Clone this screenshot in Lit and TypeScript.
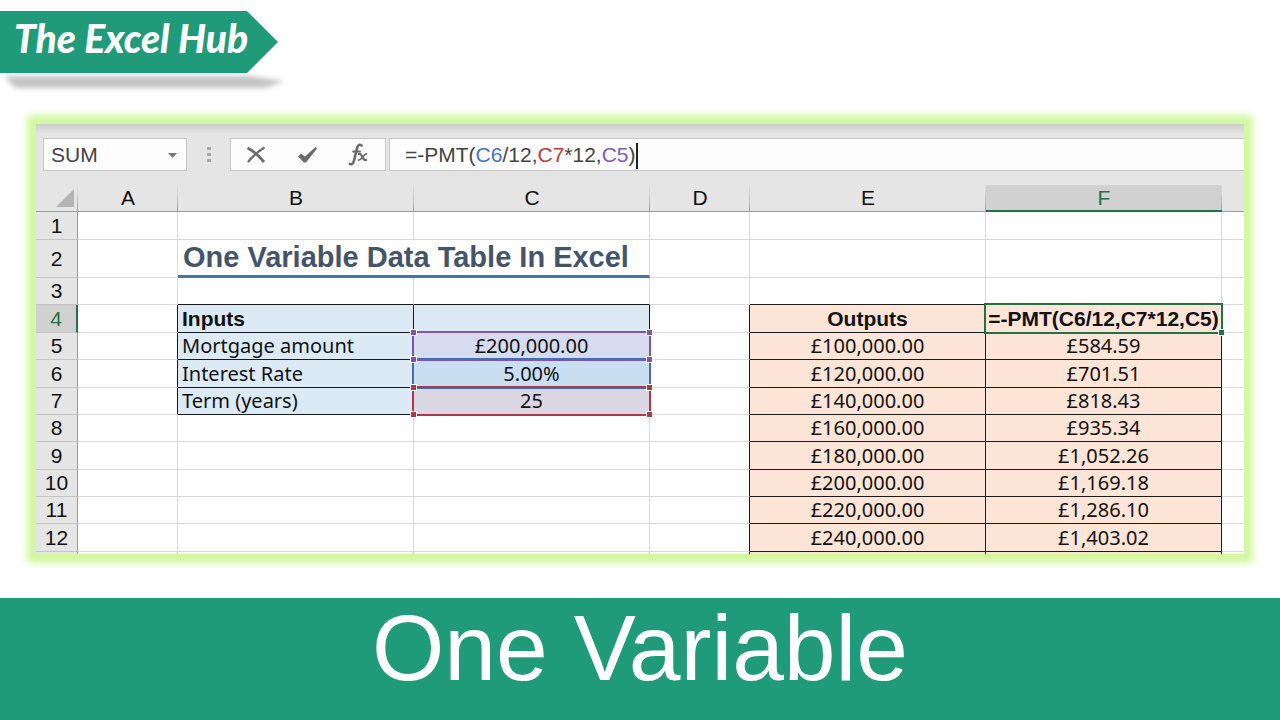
import { LitElement, html, css, nothing } from "lit";
import { customElement, property } from "lit/decorators.js";
import { classMap } from "lit/directives/class-map.js";

const COLUMNS = ["A", "B", "C", "D", "E", "F"];

const INPUTS: Record<number, [string, string, string]> = {
  4: ["Inputs", "", ""],
  5: ["Mortgage amount", "£200,000.00", "purple"],
  6: ["Interest Rate", "5.00%", "blue"],
  7: ["Term (years)", "25", "red"],
};

const OUTPUTS: Record<number, [string, string]> = {
  4: ["Outputs", "=-PMT(C6/12,C7*12,C5)"],
  5: ["£100,000.00", "£584.59"],
  6: ["£120,000.00", "£701.51"],
  7: ["£140,000.00", "£818.43"],
  8: ["£160,000.00", "£935.34"],
  9: ["£180,000.00", "£1,052.26"],
  10: ["£200,000.00", "£1,169.18"],
  11: ["£220,000.00", "£1,286.10"],
  12: ["£240,000.00", "£1,403.02"],
  13: ["", ""],
};

@customElement("brand-ribbon")
export class BrandRibbon extends LitElement {
  static styles = css`
    :host {
      display: block;
      position: relative;
      width: max-content;
    }
    .shape {
      position: absolute;
      left: 0;
      top: 0;
      width: 290px;
      height: 96px;
    }
    .name {
      position: relative;
      box-sizing: border-box;
      min-width: 278px;
      height: 62px;
      margin: 0;
      padding: 0 31px 8px 14px;
      font: italic 900 39px/54px Lato, "Liberation Sans", sans-serif;
      color: #fff;
      white-space: nowrap;
    }
  `;
  render() {
    return html`
      <svg class="shape" viewBox="0 0 290 96" aria-hidden="true">
        <defs>
          <filter id="soft" x="-10%" y="-60%" width="120%" height="220%">
            <feGaussianBlur stdDeviation="2.4" />
          </filter>
        </defs>
        <path d="M4 65H250L284 70L266 77H15Z" fill="#c4c4c4" filter="url(#soft)" />
        <path d="M0 0H247L278 31L247 62H0Z" fill="#1f9b79" />
      </svg>
      <h2 class="name">The Excel Hub</h2>
    `;
  }
}

@customElement("formula-bar")
export class FormulaBar extends LitElement {
  static styles = css`
    :host {
      display: flex;
      height: 33px;
      padding: 14px 0 14px 7px;
      background: linear-gradient(#cccccc, #e5e5e5 10px);
      font: 21px/32px "Liberation Sans", Arial, sans-serif;
      color: #444;
    }
    .box {
      box-sizing: border-box;
      height: 33px;
      background: #fdfdfd;
      border: 1px solid #c8c8c8;
    }
    .name {
      position: relative;
      width: 144px;
    }
    .name select {
      appearance: none;
      width: 100%;
      height: 100%;
      padding: 0 30px 0 7px;
      border: 0;
      background: none;
      font: inherit;
      line-height: 30px;
      color: inherit;
    }
    .arrow {
      position: absolute;
      right: 9px;
      top: 14px;
      width: 9px;
      height: 5px;
      pointer-events: none;
    }
    .grip {
      width: 43px;
      height: 33px;
    }
    .actions {
      display: flex;
      width: 156px;
    }
    .actions button {
      flex: 1;
      display: grid;
      place-items: center;
      padding: 0;
      border: 0;
      background: none;
    }
    .actions svg {
      width: 24px;
      height: 26px;
    }
    .entry {
      flex: 1;
      margin-left: 3px;
      padding-left: 15px;
      border-right: 0;
      white-space: nowrap;
      outline: none;
    }
    .blue {
      color: #4472c4;
    }
    .red {
      color: #c0393b;
    }
    .purple {
      color: #8458b3;
    }
    .caret {
      display: inline-block;
      width: 2px;
      height: 26px;
      vertical-align: middle;
      background: #222;
    }
  `;
  render() {
    return html`
      <div class="box name">
        <select aria-label="Name box">
          <option>SUM</option>
        </select>
        <svg class="arrow" viewBox="0 0 9 5" aria-hidden="true"><path d="M0 0H9L4.5 5Z" fill="#777" /></svg>
      </div>
      <svg class="grip" viewBox="0 0 43 33" aria-hidden="true">
        <path d="M20 9h4v3h-4zM20 15h4v3h-4zM20 21h4v3h-4z" fill="#a8a8a8" />
      </svg>
      <div class="box actions">
        <button aria-label="Cancel">
          <svg viewBox="0 0 24 26">
            <path d="M2.500 6C8 8.500 14 14 19 20" fill="none" stroke="#6b6b6b" stroke-width="2.800" />
            <path d="M19.500 5.500C13 9.500 7 15 3 20" fill="none" stroke="#6b6b6b" stroke-width="2.200" />
          </svg>
        </button>
        <button aria-label="Enter">
          <svg viewBox="0 0 24 26">
            <path d="M2 14.500L5 11.500L9 14.500L19.500 5L21 6.500L10 20.500H8Z" fill="#6b6b6b" />
          </svg>
        </button>
        <button aria-label="Insert function">
          <svg viewBox="0 0 24 26" fill="none" stroke="#6b6b6b" stroke-linecap="round">
            <path d="M14.500 3.500C12 1.500 10.500 4 9.800 7L7 18.500C6.300 21.500 4.800 23 2.800 21.800" stroke-width="2.600" />
            <path d="M6 9.500H13" stroke-width="1.800" />
            <path d="M12 12C15.500 10.500 15 19 19 18" stroke-width="2.300" />
            <path d="M19.500 11.800C16.500 12 15 18 11.500 18.200" stroke-width="1.700" />
          </svg>
        </button>
      </div>
      <div class="box entry" role="textbox" aria-label="Formula" contenteditable="true" spellcheck="false">=-PMT(<span class="blue">C6</span>/12,<span class="red">C7</span>*12,<span class="purple">C5</span>)<span class="caret"></span></div>
    `;
  }
}

@customElement("work-sheet")
export class WorkSheet extends LitElement {
  @property({ type: Number }) activeRow = 4;
  @property() activeColumn = "F";

  static styles = css`
    :host {
      display: block;
      overflow: hidden;
      background: #fff;
      font: 20px/26px "Noto Sans", "Open Sans", sans-serif;
      color: #111;
    }
    table {
      width: 100%;
      table-layout: fixed;
      border-collapse: separate;
      border-spacing: 0;
    }
    .rows {
      width: 42px;
    }
    .narrow {
      width: 100px;
    }
    .wide {
      width: 236px;
    }
    th,
    td {
      box-sizing: border-box;
      height: 27px;
      padding: 0;
      border: 0 solid #d9d9d9;
      border-width: 0 1px 1px 0;
      font-weight: 400;
      line-height: 26px;
      text-align: center;
      white-space: nowrap;
    }
    th {
      font-family: "Liberation Sans", Arial, sans-serif;
      font-size: 21px;
    }
    tbody tr.tall > * {
      height: 28px;
    }
    tbody tr.title > * {
      height: 38px;
    }
    tbody tr.partial > * {
      height: 2px;
      border-bottom: 0;
    }
    thead th {
      background: linear-gradient(#e5e5e5, #a0a0a0) right / 1px 100% no-repeat #e5e5e5;
      border-right: 0;
      border-bottom-color: #9c9c9c;
    }
    thead th:last-child {
      background: #e5e5e5;
    }
    thead th.active {
      background-color: #d1d1d1;
      border-bottom: 2px solid #217346;
      line-height: 25px;
      color: #217346;
    }
    tbody th {
      background: #e5e5e5;
      border-color: #c4c4c4;
      border-right-color: #9c9c9c;
    }
    tbody th.active {
      background: #d1d1d1;
      border-right: 2px solid #217346;
      color: #217346;
    }
    .all {
      display: block;
      width: 100%;
      height: 26px;
      padding: 0;
      border: 0;
      background: none;
    }
    .all svg {
      display: block;
      width: 18px;
      height: 18px;
      margin-left: auto;
      margin-right: 4px;
    }
    .heading {
      padding-left: 5px;
      border-bottom: 3px solid #4472b4;
      font: 700 29px/35px "Liberation Sans", Arial, sans-serif;
      text-align: left;
      color: #44546a;
    }
    .input,
    .output {
      border-color: #1a1a1a;
    }
    .input {
      background: #dceaf6;
    }
    .output {
      background: #fce4d6;
    }
    .label {
      padding-left: 4px;
      text-align: left;
    }
    .bold {
      font-family: "Liberation Sans", Arial, sans-serif;
      font-size: 21px;
      font-weight: 700;
    }
    .edge-right {
      border-right-color: #1a1a1a;
    }
    .edge-bottom {
      border-bottom-color: #1a1a1a;
    }
    .last {
      border-right-color: transparent;
    }
    .ref {
      position: relative;
    }
    .purple {
      --mark: #7e55a8;
      background: #d6dbf0;
    }
    .blue {
      --mark: #3f6fae;
      background: #cadef2;
    }
    .red {
      --mark: #ac3a45;
      background: #dbd7e2;
    }
    .frame {
      position: absolute;
      inset: -2px;
      z-index: 2;
      border: 2px solid var(--mark);
      pointer-events: none;
    }
    .blue .frame {
      z-index: 1;
    }
    .frame i {
      position: absolute;
      width: 5px;
      height: 5px;
      border: 1px solid #fff;
      background: var(--mark);
    }
    .frame i:nth-child(odd) {
      left: -4px;
    }
    .frame i:nth-child(even) {
      right: -4px;
    }
    .frame i:nth-child(-n + 2) {
      top: -4px;
    }
    .frame i:nth-child(n + 3) {
      bottom: -4px;
    }
    .editing {
      --mark: #217346;
    }
    .editing .frame i {
      right: -4px;
      bottom: -4px;
      left: auto;
      top: auto;
    }
  `;

  private frame(corners: number) {
    return html`<span class="frame">${Array.from({ length: corners }, () => html`<i></i>`)}</span>`;
  }

  private inputCells(row: number) {
    const data = INPUTS[row];
    if (row === 2) return html`<td class="heading" colspan="2">One Variable Data Table In Excel</td>`;
    if (!data) {
      const edge = classMap({ "edge-bottom": row === 3 });
      return html`<td class=${edge}></td><td class=${edge}></td>`;
    }
    const [label, value, mark] = data;
    return html`
      <td class=${classMap({ input: true, label: true, bold: row === 4 })}>${label}</td>
      <td class=${mark ? `input ref ${mark}` : "input"}>${value}${mark ? this.frame(4) : nothing}</td>
    `;
  }

  private outputCells(row: number) {
    const data = OUTPUTS[row];
    if (!data) {
      const edge = classMap({ "edge-bottom": row === 3 });
      return html`<td class=${edge}></td><td class=${edge}></td>`;
    }
    const head = row === this.activeRow;
    return html`
      <td class=${classMap({ output: true, bold: head })}>${data[0]}</td>
      <td class=${classMap({ output: true, bold: head, ref: head, editing: head })}>${data[1]}${head ? this.frame(1) : nothing}</td>
    `;
  }

  render() {
    const rows = Array.from({ length: 13 }, (_, i) => i + 1);
    const tall = [1, 4, 6, 9, 12];
    return html`
      <table>
        <colgroup>
          <col class="rows" />
          <col class="narrow" />
          <col class="wide" />
          <col class="wide" />
          <col class="narrow" />
          <col class="wide" />
          <col class="wide" />
          <col />
        </colgroup>
        <thead>
          <tr>
            <th>
              <button class="all" aria-label="Select all">
                <svg viewBox="0 0 18 18"><path d="M18 0V18H0Z" fill="#b4b4b4" /></svg>
              </button>
            </th>
            ${COLUMNS.map((c) => html`<th scope="col" class=${classMap({ active: c === this.activeColumn })}>${c}</th>`)}
            <th></th>
          </tr>
        </thead>
        <tbody>
          ${rows.map(
            (r) => html`
              <tr class=${classMap({ tall: tall.includes(r), title: r === 2, partial: r === 13 })}>
                <th scope="row" class=${classMap({ active: r === this.activeRow })}>${r < 13 ? r : nothing}</th>
                <td class=${classMap({ "edge-right": r in INPUTS })}></td>
                ${this.inputCells(r)}
                <td class=${classMap({ "edge-right": r in OUTPUTS })}></td>
                ${this.outputCells(r)}
                <td class="last"></td>
              </tr>
            `
          )}
        </tbody>
      </table>
    `;
  }
}

@customElement("app-root")
export class AppRoot extends LitElement {
  static styles = css`
    :host {
      display: flex;
      flex-direction: column;
      box-sizing: border-box;
      min-height: 100vh;
      padding-top: 11px;
      background: #fff;
    }
    .card {
      margin: 51px 36px 44px;
      background: #e5e5e5;
      box-shadow: 0 0 7px 9px #d2f8a0;
    }
    .banner {
      flex: 1;
      background: #1f9b79;
      color: #fff;
      text-align: center;
    }
    .banner h1 {
      margin: 0;
      font: 400 93px/100px "Liberation Sans", Arial, sans-serif;
    }
  `;
  render() {
    return html`
      <brand-ribbon></brand-ribbon>
      <main class="card">
        <formula-bar></formula-bar>
        <work-sheet></work-sheet>
      </main>
      <footer class="banner"><h1>One Variable</h1></footer>
    `;
  }
}
